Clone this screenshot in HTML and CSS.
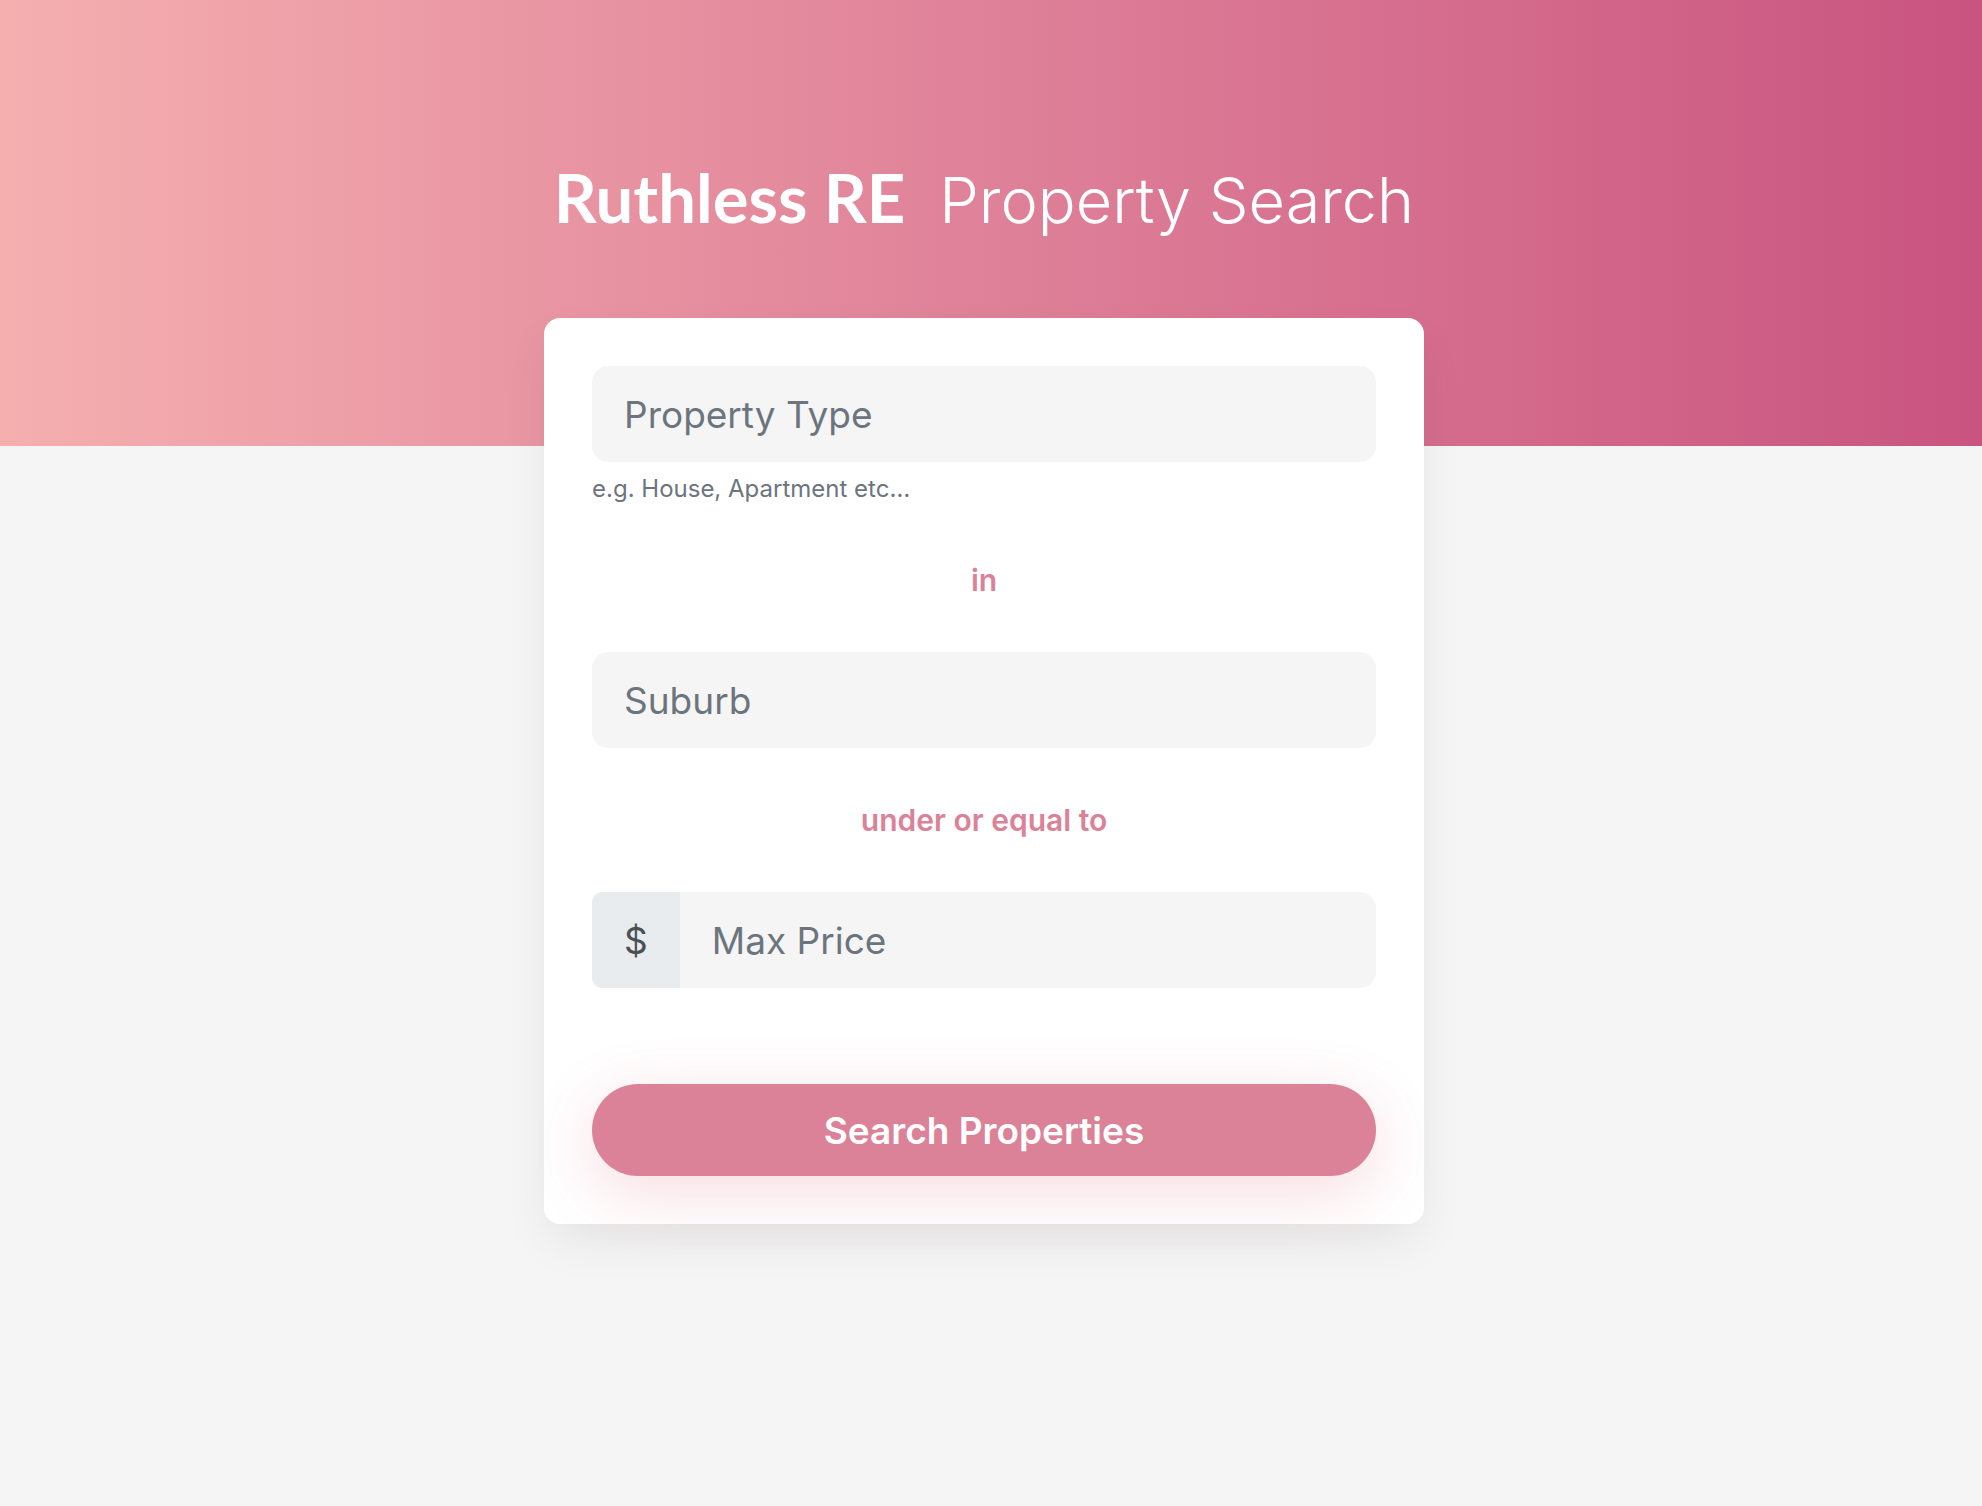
FILE: index.html
```html
<!DOCTYPE html>
<html lang="en">
<head>
<meta charset="utf-8">
<meta name="viewport" content="width=device-width, initial-scale=1">
<title>Ruthless RE Property Search</title>
<link rel="stylesheet" href="styles.css">
</head>
<body>
<main class="page">
  <h1 class="title"><strong class="brand">Ruthless RE</strong> <span class="tagline">Property Search</span></h1>
  <form class="card">
    <input class="field" type="text" aria-label="Property Type" aria-describedby="type-help" placeholder="Property Type">
    <small class="help" id="type-help">e.g. House, Apartment etc…</small>
    <p class="joiner">in</p>
    <input class="field" type="text" aria-label="Suburb" placeholder="Suburb">
    <p class="joiner">under or equal to</p>
    <div class="price">
      <label class="currency" for="max-price">$</label>
      <input class="field price-field" id="max-price" type="text" aria-label="Max Price" placeholder="Max Price">
    </div>
    <button class="submit" type="submit">Search Properties</button>
  </form>
</main>
</body>
</html>
```
FILE: styles.css
```css
* {
  box-sizing: border-box;
}

body {
  margin: 0;
  background: #f5f5f5 linear-gradient(to right, #f5afaf 0%, #df8199 50%, #c9547f 100%) top / 100% 446px no-repeat;
  font-family: Inter, "Liberation Sans", sans-serif;
  color: #495057;
}

.page {
  display: flex;
  flex-direction: column;
  align-items: center;
  padding: 157px 14px 96px 0;
}

.title {
  display: flex;
  flex-wrap: wrap;
  justify-content: center;
  align-items: baseline;
  gap: 0 34px;
  margin: 0 0 78px;
  font-size: 63px;
  line-height: 80px;
  font-weight: 300;
  color: #fff;
}

.brand {
  font-family: Lato, sans-serif;
  font-size: 67px;
  font-weight: 700;
}

.card {
  display: flex;
  flex-direction: column;
  width: 100%;
  max-width: 880px;
  padding: 48px;
  border-radius: 16px;
  background: #fff;
  box-shadow: 0 20px 48px -4px rgba(0, 0, 0, 0.07);
}

.field {
  width: 100%;
  height: 96px;
  padding: 0 32px;
  border: 0;
  border-radius: 16px;
  background: #f5f5f5;
  font: inherit;
  font-size: 37px;
  color: #495057;
}

.field::placeholder {
  color: #6c757d;
  opacity: 1;
}

.help {
  margin: 8px 0 0;
  font-size: 24px;
  line-height: 38px;
  color: #6c757d;
}

.joiner {
  margin: 48px 0;
  font-size: 30px;
  line-height: 48px;
  font-weight: 600;
  text-align: center;
  color: #db8298;
}

.price {
  display: flex;
}

.currency {
  display: flex;
  align-items: center;
  padding: 0 32px;
  border-radius: 10px 0 0 10px;
  background: #e9ecef;
  font-size: 37px;
}

.price-field {
  flex: 1;
  min-width: 0;
  border-radius: 0 16px 16px 0;
}

.submit {
  height: 92px;
  margin: 96px 0 0;
  border: 0;
  border-radius: 46px;
  background: #db8298;
  box-shadow: 0 16px 64px rgba(210, 53, 88, 0.18);
  font: inherit;
  font-size: 37px;
  font-weight: 600;
  color: #fff;
}
```
